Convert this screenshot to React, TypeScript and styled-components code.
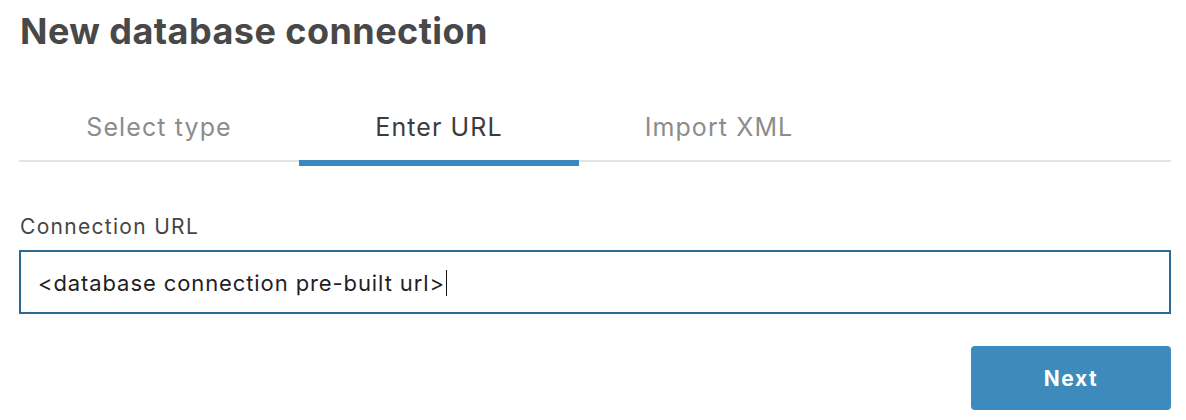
import styled, { createGlobalStyle } from 'styled-components';

const GlobalStyle = createGlobalStyle`
  html, body {
    margin: 0;
    padding: 0;
    background: #fff;
  }
  body {
    font-family: Inter, "Noto Sans", sans-serif;
    -webkit-font-smoothing: antialiased;
  }
`;

const TABS = ['Select type', 'Enter URL', 'Import XML'];
const ACTIVE_TAB = 1;

export default function App() {
  return (
    <>
      <GlobalStyle />
      <Page>
        <Title>New database connection</Title>
        <TabBar>
          {TABS.map((label, i) => (
            <Tab key={label} $active={i === ACTIVE_TAB}>
              {label}
            </Tab>
          ))}
        </TabBar>
        <Field>
          <Label htmlFor="conn-url">Connection URL</Label>
          <InputBox>
            <InputText id="conn-url">
              {'<database connection pre-built url>'}
              <Caret />
            </InputText>
          </InputBox>
        </Field>
        <Actions>
          <NextButton type="button">Next</NextButton>
        </Actions>
      </Page>
    </>
  );
}

const Page = styled.div`
  display: flex;
  flex-direction: column;
  padding: 8px 15px 0 19px;
  width: 1186px;
  box-sizing: border-box;
`;

const Title = styled.h1`
  margin: 0;
  font-size: 36px;
  font-weight: 700;
  color: #484848;
  letter-spacing: 0.45px;
  line-height: 46px;
  padding-left: 1px;
`;

const TabBar = styled.div`
  display: flex;
  margin-top: 38px;
  border-bottom: 2px solid #e4e4e4;
  height: 68px;
  box-sizing: content-box;
`;

const Tab = styled.div<{ $active: boolean }>`
  width: 280px;
  display: flex;
  align-items: center;
  justify-content: center;
  font-size: 25px;
  letter-spacing: 1.1px;
  color: ${({ $active }) => ($active ? '#3c3c3c' : '#8c8c8c')};
  position: relative;
  padding-top: 2px;
  box-sizing: border-box;

  &::after {
    content: '';
    display: ${({ $active }) => ($active ? 'block' : 'none')};
    position: absolute;
    left: 0;
    right: 0;
    bottom: -6px;
    height: 6px;
    background: #3a89be;
  }
`;

const Field = styled.div`
  display: flex;
  flex-direction: column;
  margin-top: 51px;
`;

const Label = styled.label`
  font-size: 21px;
  letter-spacing: 1.3px;
  color: #464646;
  line-height: 28px;
  padding-left: 1px;
  margin-bottom: 9px;
`;

const InputBox = styled.div`
  height: 64px;
  border: 2px solid #2d6a8f;
  box-sizing: border-box;
  display: flex;
  align-items: center;
  padding: 2px 17px 0;
`;

const InputText = styled.div`
  font-size: 22px;
  letter-spacing: 0.9px;
  color: #1f1f1f;
  display: flex;
  align-items: center;
`;

const Caret = styled.span`
  display: inline-block;
  width: 1.5px;
  height: 26px;
  background: #111;
  margin-left: 1px;
`;

const Actions = styled.div`
  display: flex;
  justify-content: flex-end;
  margin-top: 32px;
`;

const NextButton = styled.button`
  width: 200px;
  height: 64px;
  background: #3d8bbd;
  color: #fff;
  border: none;
  border-radius: 4px;
  font-family: Inter, "Noto Sans", sans-serif;
  font-size: 21px;
  letter-spacing: 1.5px;
  font-weight: 700;
  cursor: pointer;
`;
